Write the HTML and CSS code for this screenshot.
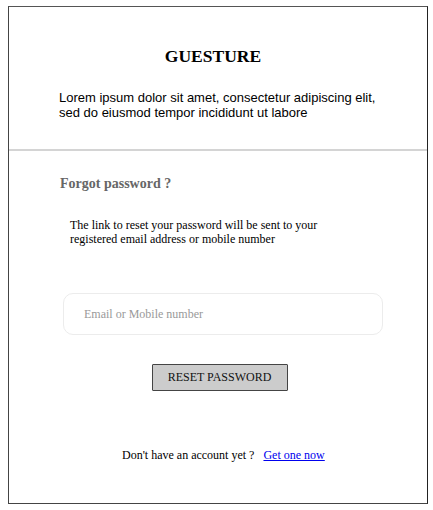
FILE: index.html
```html
<!DOCTYPE html>
<html>
<head>
<meta charset="utf-8">
<link rel="stylesheet" href="styles.css">
</head>
<body>
<div class="frame">
  <header class="top">
    <h1 class="brand">GUESTURE</h1>
    <p class="lead">Lorem ipsum dolor sit amet, consectetur adipiscing elit,<br>sed do eiusmod tempor incididunt ut labore</p>
  </header>
  <main class="form">
    <h2 class="title">Forgot password ?</h2>
    <p class="info">The link to reset your password will be sent to your<br>registered email address or mobile number</p>
    <div class="field">Email or Mobile number</div>
    <div class="actions"><button class="btn">RESET PASSWORD</button></div>
    <p class="signup">Don't have an account yet ? <a href="#" class="link">Get one now</a></p>
  </main>
</div>
</body>
</html>
```
FILE: styles.css
```css
html, body { margin: 0; padding: 0; background: #fff; }
body { font-family: "Liberation Serif", "Times New Roman", serif; color: #000; }
.frame {
  margin: 6px 0 0 8px;
  width: 418px;
  height: 496px;
  border: 1px solid #222;
  border-top-color: #555;
  border-bottom-color: #444;
  border-left-color: #444;
  display: flex;
  flex-direction: column;
}
.top {
  height: 142px;
  border-bottom: 2px solid #d4d4d4;
  display: flex;
  flex-direction: column;
}
.brand {
  margin: 39px 10px 0 0;
  text-align: center;
  font-size: 17.5px;
  line-height: 20px;
  font-weight: bold;
}
.lead {
  margin: 24px 0 0 50px;
  font-family: "Liberation Sans", Arial, sans-serif;
  font-size: 13px;
  line-height: 15px;
}
.form { display: flex; flex-direction: column; }
.title {
  margin: 24px 0 0 51px;
  font-size: 14px;
  line-height: 18px;
  font-weight: bold;
  color: #666;
}
.info {
  margin: 25px 0 0 61px;
  font-size: 12px;
  line-height: 14px;
}
.field {
  margin: 47px 0 0 54px;
  width: 298px;
  height: 40px;
  border: 1px solid #ececec;
  border-radius: 10px;
  padding-left: 20px;
  font-size: 12px;
  line-height: 40px;
  color: #999;
}
.actions { display: flex; justify-content: center; margin-top: 29px; padding-left: 3px; }
.btn {
  width: 136px;
  height: 27px;
  background: #ccc;
  border: 1px solid #444;
  border-radius: 1px;
  font-family: "Liberation Serif", "Times New Roman", serif;
  font-size: 12px;
  color: #111;
  padding: 0;
}
.signup {
  margin: 56px 0 0 113px;
  font-size: 12px;
  line-height: 16px;
}
.link { color: #00e; margin-left: 6px; text-decoration: underline; }
```
